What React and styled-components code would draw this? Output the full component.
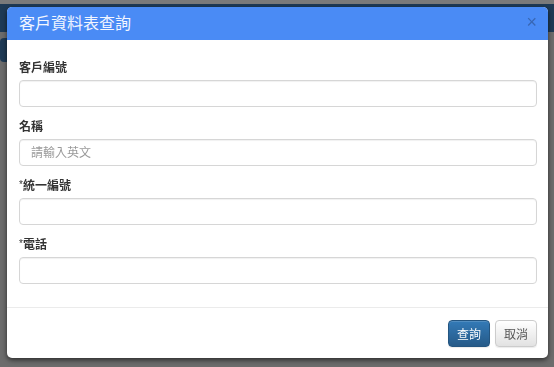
import React from "react";
import styled, { createGlobalStyle } from "styled-components";

const Global = createGlobalStyle`
  html, body { margin: 0; padding: 0; }
  body {
    background: #6f6f6f;
    font-family: "Liberation Sans", "Noto Sans CJK TC", sans-serif;
    width: 554px; height: 367px; overflow: hidden;
  }
`;

const Page = styled.div`
  width: 554px;
  height: 367px;
  background: #6c6c6c;
  border-top: 4px solid #7a7a7a;
  box-sizing: border-box;
`;

const NavBar = styled.div`
  height: 28px;
  background: #1e3a55;
`;

const PageButton = styled.div`
  margin-top: 6px;
  width: 40px;
  height: 24px;
  background: #1e3a55;
  border-radius: 4px;
`;

const Modal = styled.div`
  position: fixed;
  top: 7px;
  left: 7px;
  width: 541px;
  height: 351px;
  background: #fff;
  border-radius: 5px;
  box-shadow: 0 2px 5px rgba(0, 0, 0, 0.6);
  display: flex;
  flex-direction: column;
  overflow: hidden;
`;

const Header = styled.div`
  height: 33px;
  flex: none;
  background: #4a8bf5;
  display: flex;
  align-items: center;
  justify-content: space-between;
  padding: 0 11px 0 12px;
`;

const Title = styled.div`
  color: #f2f6ff;
  font-size: 16px;
  line-height: 20px;
`;

const Close = styled.span`
  color: #2a4a80;
  opacity: 0.55;
  font-size: 18px;
  font-weight: normal;
  line-height: 1;
  margin-top: -4px;
`;

const Body = styled.div`
  flex: 1;
  padding: 21px 11px 0 12px;
`;

const Group = styled.div`
  margin-bottom: 13px;
`;

const Label = styled.label`
  display: block;
  font-size: 12px;
  line-height: 15px;
  font-weight: bold;
  color: #333;
  margin-bottom: 4px;
`;

const Star = styled.span`
  font-weight: normal;
  font-size: 10px;
  vertical-align: top;
  line-height: 12px;
`;

const Input = styled.input`
  display: block;
  box-sizing: border-box;
  width: 100%;
  height: 27px;
  border: 1px solid #d6d6d6;
  border-radius: 4px;
  box-shadow: inset 0 1px 1px rgba(0, 0, 0, 0.06);
  padding: 0 11px;
  font-family: inherit;
  font-size: 12px;
  color: #555;
  outline: none;
  &::placeholder { color: #9a9a9a; }
`;

const Footer = styled.div`
  flex: none;
  height: 51px;
  box-sizing: border-box;
  border-top: 1px solid #ebebeb;
  padding: 12px 11px 0 0;
  display: flex;
  justify-content: flex-end;
  align-items: flex-start;
  gap: 5px;
`;

const Button = styled.button`
  height: 27px;
  width: 42px;
  padding: 0;
  border-radius: 4px;
  font-family: inherit;
  font-size: 12px;
  cursor: pointer;
  border: 1px solid ${(p) => (p.$primary ? "#245580" : "#cccccc")};
  color: ${(p) => (p.$primary ? "#fff" : "#555")};
  background: ${(p) =>
    p.$primary
      ? "linear-gradient(to bottom, #337ab7 0%, #265a88 100%)"
      : "linear-gradient(to bottom, #ffffff 0%, #e2e2e2 100%)"};
  box-shadow: inset 0 1px 0 rgba(255, 255, 255, 0.15), 0 1px 1px rgba(0, 0, 0, 0.08);
`;

const fields = [
  { label: "客戶編號" },
  { label: "名稱", placeholder: "請輸入英文" },
  { label: "統一編號", required: true },
  { label: "電話", required: true },
];

export default function App() {
  return (
    <>
      <Global />
      <Page>
        <NavBar />
        <PageButton />
      </Page>
      <Modal>
        <Header>
          <Title>客戶資料表查詢</Title>
          <Close>×</Close>
        </Header>
        <Body>
          {fields.map((f) => (
            <Group key={f.label}>
              <Label>
                {f.required && <Star>*</Star>}
                {f.label}
              </Label>
              <Input placeholder={f.placeholder || ""} />
            </Group>
          ))}
        </Body>
        <Footer>
          <Button $primary>查詢</Button>
          <Button>取消</Button>
        </Footer>
      </Modal>
    </>
  );
}
